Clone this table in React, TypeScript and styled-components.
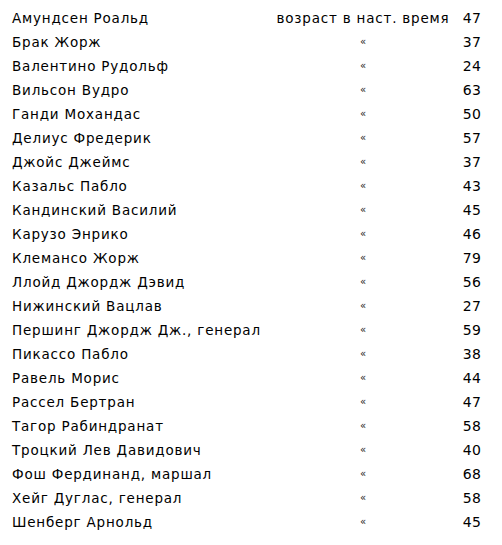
import React from 'react';
import styled, { createGlobalStyle } from 'styled-components';

const GlobalStyle = createGlobalStyle`
  html, body {
    margin: 0;
    padding: 0;
    background: #ffffff;
  }
  body {
    font-family: "DejaVu Sans", "Verdana", sans-serif;
    color: #000000;
  }
`;

const Page = styled.div`
  width: 502px;
  height: 545px;
  box-sizing: border-box;
  padding: 6px 21px 0 12px;
  background: #ffffff;
`;

const Table = styled.div`
  display: flex;
  flex-direction: column;
`;

const Row = styled.div`
  display: grid;
  grid-template-columns: 258px 186px 1fr;
  align-items: center;
  height: 24px;
  font-size: 13.5px;
  line-height: 24px;
  letter-spacing: 0.8px;
`;

const Name = styled.div`
  white-space: nowrap;
`;

const Note = styled.div<{ $ditto?: boolean }>`
  text-align: center;
  white-space: nowrap;
  font-size: ${p => (p.$ditto ? '10px' : '13.5px')};
  letter-spacing: ${p => (p.$ditto ? '0' : '0.8px')};
  color: ${p => (p.$ditto ? '#222222' : '#000000')};
`;

const Age = styled.div`
  text-align: right;
  font-size: 14px;
  letter-spacing: 0.2px;
`;

const people: [string, number][] = [
  ['Амундсен Роальд', 47],
  ['Брак Жорж', 37],
  ['Валентино Рудольф', 24],
  ['Вильсон Вудро', 63],
  ['Ганди Мохандас', 50],
  ['Делиус Фредерик', 57],
  ['Джойс Джеймс', 37],
  ['Казальс Пабло', 43],
  ['Кандинский Василий', 45],
  ['Карузо Энрико', 46],
  ['Клемансо Жорж', 79],
  ['Ллойд Джордж Дэвид', 56],
  ['Нижинский Вацлав', 27],
  ['Першинг Джордж Дж., генерал', 59],
  ['Пикассо Пабло', 38],
  ['Равель Морис', 44],
  ['Рассел Бертран', 47],
  ['Тагор Рабиндранат', 58],
  ['Троцкий Лев Давидович', 40],
  ['Фош Фердинанд, маршал', 68],
  ['Хейг Дуглас, генерал', 58],
  ['Шенберг Арнольд', 45],
];

export default function App() {
  return (
    <>
      <GlobalStyle />
      <Page>
        <Table>
          {people.map(([name, age], i) => (
            <Row key={name}>
              <Name>{name}</Name>
              {i === 0 ? (
                <Note>возраст в наст. время</Note>
              ) : (
                <Note $ditto>«</Note>
              )}
              <Age>{age}</Age>
            </Row>
          ))}
        </Table>
      </Page>
    </>
  );
}
